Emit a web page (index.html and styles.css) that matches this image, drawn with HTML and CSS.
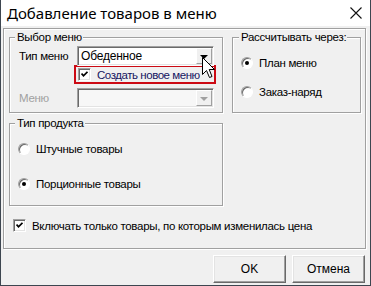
FILE: index.html
```html
<!DOCTYPE html>
<html lang="ru">
<head>
    <meta charset="UTF-8">
    <title>Добавление товаров в меню</title>
    <link rel="stylesheet" href="styles.css">
</head>
<body>
    <div class="window">
        <div class="titlebar">
            <span class="title">Добавление товаров в меню</span>
            <svg class="close" width="12" height="12" viewBox="0 0 12 12">
                <path d="M0.5 0.5 L11.5 11.5 M11.5 0.5 L0.5 11.5" stroke="#111" stroke-width="1.1" fill="none"/>
            </svg>
        </div>

        <div class="client">
            <div class="panel">
                <div class="top-row">
                    <fieldset class="group group-menu">
                        <legend>Выбор меню</legend>
                        <div class="field-row">
                            <span class="field-label">Тип меню</span>
                            <div class="combo">
                                <span class="combo-text">Обеденное</span>
                                <span class="combo-btn"><span class="arrow"></span></span>
                            </div>
                        </div>
                        <div class="highlight">
                            <span class="check"><svg width="7" height="7" viewBox="0 0 7 7"><path d="M0.5 2.5 L2.5 4.8 L6.5 0.8" stroke="#000" stroke-width="1.8" fill="none"/></svg></span>
                            <span class="highlight-text">Создать новое меню</span>
                        </div>
                        <div class="field-row disabled">
                            <span class="field-label">Меню</span>
                            <div class="combo">
                                <span class="combo-text"></span>
                                <span class="combo-btn"><span class="arrow"></span></span>
                            </div>
                        </div>
                    </fieldset>

                    <fieldset class="group group-calc">
                        <legend>Рассчитывать через:</legend>
                        <div class="radio-row first"><span class="radio checked"></span>План меню</div>
                        <div class="radio-row"><span class="radio"></span>Заказ-наряд</div>
                    </fieldset>
                </div>

                <fieldset class="group group-product">
                    <legend>Тип продукта</legend>
                    <div class="radio-row first"><span class="radio"></span>Штучные товары</div>
                    <div class="radio-row"><span class="radio checked"></span>Порционные товары</div>
                </fieldset>

                <div class="check-row">
                    <span class="check"><svg width="7" height="7" viewBox="0 0 7 7"><path d="M0.5 2.5 L2.5 4.8 L6.5 0.8" stroke="#000" stroke-width="1.8" fill="none"/></svg></span>
                    <span>Включать только товары, по которым изменилась цена</span>
                </div>
            </div>

            <div class="buttons">
                <button class="btn">OK</button>
                <button class="btn">Отмена</button>
            </div>
        </div>

        <!-- mouse pointer over the combo arrow -->
        <svg class="cursor" width="14" height="22" viewBox="0 0 14 22">
            <path d="M0.5 0.5 L0.5 17.5 L4.5 13.5 L7.5 20.5 L10 19.5 L7.2 12.5 L12.5 12.5 Z" fill="#fff" stroke="#000" stroke-width="1"/>
        </svg>
    </div>
</body>
</html>
```

FILE: styles.css
```css
body {
    margin: 0;
    background: #fff;
    font-family: 'Liberation Sans', Arial, sans-serif;
    font-size: 11.5px;
    letter-spacing: -0.3px;
    color: #000;
}
.window {
    position: relative;
    width: 371px;
    height: 286px;
    box-sizing: border-box;
    border: 1px solid #3d4650;
    border-top: none;
    overflow: hidden;
}
.titlebar {
    height: 26px;
    background: #fff;
    display: flex;
    align-items: center;
    justify-content: space-between;
    padding: 0 8px 0 6px;
}
.title {
    font-family: 'Noto Sans', sans-serif;
    font-size: 15px;
    letter-spacing: 0;
    color: #000;
    margin-top: -1px;
}
.close {
    display: block;
    margin-top: -1px;
}
.client {
    height: 259px;
    background: #f0f0f0;
    padding: 2px 0 0 2px;
    box-sizing: border-box;
}
.panel {
    width: 363px;
    height: 221px;
    box-sizing: border-box;
    border: 1px solid #a0a0a0;
    box-shadow: inset 1px 1px #fff, 1px 1px #fff;
    padding: 1px 0 0 5px;
}
.top-row {
    display: flex;
    gap: 9px;
}
.group {
    margin: 0;
    padding: 0;
    min-width: 0;
    box-sizing: border-box;
    border: 1px solid #a0a0a0;
    box-shadow: inset 1px 1px #fff, 1px 1px #fff;
}
.group legend {
    margin-left: 5px;
    padding: 0 1px 0 2px;
    line-height: 14px;
    background: #f0f0f0;
}
.group-menu {
    width: 214px;
    height: 83px;
}
.group-calc {
    width: 129px;
    height: 83px;
}
.group-calc legend {
    margin-left: 6px;
}
.group-product {
    width: 214px;
    height: 90px;
    margin-top: 3px;
}
.field-row {
    display: flex;
    align-items: center;
    margin-top: 2px;
    padding-left: 9px;
}
.field-row.disabled {
    margin-top: 4px;
    color: #a0a0a0;
}
.field-label {
    width: 58px;
}
.combo {
    width: 137px;
    height: 20px;
    box-sizing: border-box;
    background: #fff;
    border: 1px solid;
    border-color: #a0a0a0 #fff #fff #a0a0a0;
    box-shadow: inset 1px 1px #696969, inset -1px -1px #e3e3e3;
    display: flex;
    align-items: center;
    padding: 1px 1px 1px 3px;
}
.disabled .combo {
    background: #f7f7f7;
}
.combo-text {
    flex: 1;
    font-size: 12px;
    letter-spacing: -0.2px;
}
.combo-btn {
    width: 16px;
    height: 16px;
    box-sizing: border-box;
    background: #f0f0f0;
    border: 1px solid;
    border-color: #fff #a0a0a0 #a0a0a0 #fff;
    display: flex;
    align-items: center;
    justify-content: center;
}
.arrow {
    width: 0;
    height: 0;
    border-left: 4px solid transparent;
    border-right: 4px solid transparent;
    border-top: 4px solid #000;
    margin-top: 1px;
}
.disabled .arrow {
    border-top-color: #a0a0a0;
}
.highlight {
    width: 142px;
    height: 19px;
    box-sizing: border-box;
    margin: -1px 0 0 64px;
    border: 2px solid #cc0a14;
    display: flex;
    align-items: center;
    padding-left: 2px;
    color: #151560;
    font-size: 11.5px;
    letter-spacing: -0.45px;
    white-space: nowrap;
}
.check {
    width: 13px;
    height: 13px;
    box-sizing: border-box;
    background: #fff;
    border: 1px solid;
    border-color: #a0a0a0 #fff #fff #a0a0a0;
    box-shadow: inset 1px 1px #696969, inset -1px -1px #e3e3e3;
    display: flex;
    align-items: center;
    justify-content: center;
    margin-right: 6px;
    flex: none;
}
.radio-row {
    display: flex;
    align-items: center;
    margin-top: 17px;
    padding-left: 8px;
}
.radio-row.first {
    margin-top: 13px;
}
.group-product .radio-row {
    margin-top: 23px;
}
.group-product .radio-row.first {
    margin-top: 13px;
}
.radio {
    width: 12px;
    height: 12px;
    box-sizing: border-box;
    border-radius: 50%;
    background: #fff;
    border: 1px solid;
    border-color: #a0a0a0 #fff #fff #a0a0a0;
    box-shadow: inset 1px 1px #696969;
    margin-right: 6px;
    display: flex;
    align-items: center;
    justify-content: center;
}
.radio.checked::after {
    content: '';
    width: 4px;
    height: 4px;
    border-radius: 50%;
    background: #000;
}
.check-row {
    display: flex;
    align-items: center;
    margin-top: 13px;
    padding-left: 4px;
}
.buttons {
    display: flex;
    justify-content: flex-end;
    gap: 6px;
    padding: 6px 5px 0 0;
}
.btn {
    width: 73px;
    height: 28px;
    box-sizing: border-box;
    margin: 0;
    font-family: 'Liberation Sans', Arial, sans-serif;
    font-size: 12px;
    color: #000;
    background: #f0f0f0;
    border: 1px solid;
    border-color: #fff #696969 #696969 #fff;
    box-shadow: inset -1px -1px #a0a0a0, inset 1px 1px #e3e3e3;
}
.cursor {
    position: absolute;
    left: 201px;
    top: 57px;
}
```
